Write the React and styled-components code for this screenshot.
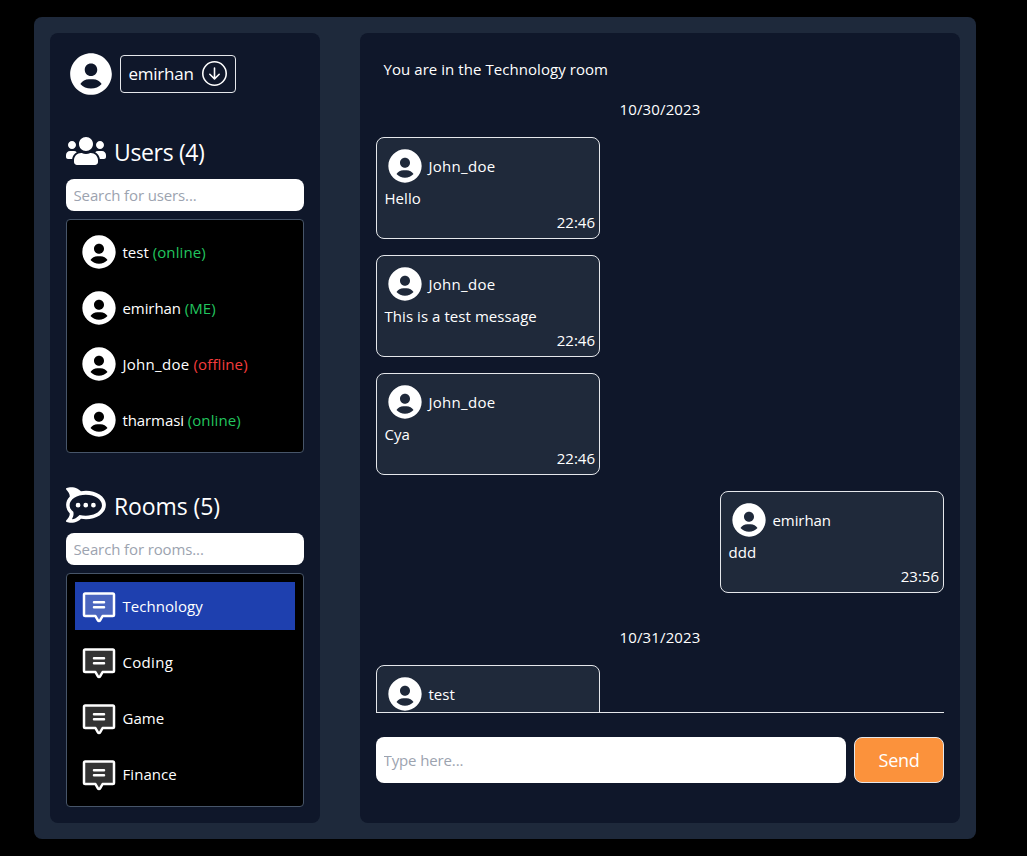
import React from "react";
import styled, { createGlobalStyle } from "styled-components";
import { BiSolidUserCircle } from "react-icons/bi";
import { FaUsers, FaRocketchat } from "react-icons/fa";
import { BsArrowDownCircle } from "react-icons/bs";
import { PiChatCenteredTextDuotone } from "react-icons/pi";

const GlobalStyle = createGlobalStyle`
  *, *::before, *::after { box-sizing: border-box; }
  body {
    margin: 0;
    background: #000;
    color: #fff;
    font: 16px/24px "Segoe UI", "Open Sans", sans-serif;
    overflow: hidden;
  }
  svg { display: block; flex: none; }
  input, button { font: inherit; color: inherit; margin: 0; }
`;

const Text = styled.span`
  font-size: ${(p) => p.$size || 15}px;
  letter-spacing: ${(p) => p.$track || 0}px;
  white-space: nowrap;
  color: ${(p) => p.$color || "inherit"};
`;

const Page = styled.div`
  height: 856px;
  padding: 17px 51px 17px 34px;
`;

const Shell = styled.main`
  display: flex;
  gap: 40px;
  height: 822px;
  padding: 16px;
  border-radius: 8px;
  background: #1e293b;
`;

const Sidebar = styled.aside`
  display: flex;
  flex-direction: column;
  width: 270px;
  padding: 16px;
  border-radius: 8px;
  background: #0f172a;
`;

const Profile = styled.div`
  display: flex;
  align-items: center;
  gap: 4px;
  height: 50px;
  margin-bottom: 32px;
`;

const ProfileButton = styled.button`
  display: flex;
  align-items: center;
  justify-content: space-between;
  width: 116px;
  height: 38px;
  padding: 0 8px 0 7.5px;
  border: 1px solid #e5e7eb;
  border-radius: 4px;
  background: transparent;

  svg { margin-bottom: 1px; }
`;

const SectionTitle = styled.h2`
  display: flex;
  align-items: center;
  gap: 8px;
  height: 40px;
  margin: ${(p) => p.$top || 0}px 0 8px;
  font-weight: 400;
  line-height: 32px;
`;

const TitleLabel = styled.span`
  padding-top: 2px;
`;

const Search = styled.input`
  width: 100%;
  height: 32px;
  padding: 0 7.5px;
  border: 0;
  border-radius: 8px;
  background: #fff;
  color: #111827;
  font-size: 15px;
  letter-spacing: -0.12px;
  &::placeholder { color: #9ca3af; opacity: 1; }
`;

const List = styled.ul`
  display: flex;
  flex-direction: column;
  gap: 8px;
  height: 234px;
  margin: 8px 0 0;
  padding: 8px;
  overflow: hidden;
  list-style: none;
  border: 1px solid #475569;
  border-radius: 4px;
  background: #000;
`;

const ListItem = styled.li`
  display: flex;
  align-items: center;
  gap: 3.5px;
  flex: none;
  height: 48px;
  padding: 4px;
  background: ${(p) => (p.$active ? "#1e40af" : "transparent")};
`;

const Chat = styled.section`
  flex: 1;
  min-width: 0;
  padding: 16px;
  border-radius: 8px;
  background: #0f172a;
`;

const RoomNotice = styled.p`
  margin: 0;
  padding: 8px 7.5px;
`;

const Messages = styled.div`
  display: flex;
  flex-direction: column;
  height: 624px;
  overflow: hidden;
  border-bottom: 1px solid #e5e7eb;
`;

const DateLine = styled.div`
  flex: none;
  margin-top: ${(p) => p.$top || 0}px;
  margin-bottom: 16px;
  text-align: center;
`;

const Bubble = styled.article`
  flex: none;
  align-self: ${(p) => (p.$mine ? "flex-end" : "flex-start")};
  width: 224px;
  height: 102px;
  margin-bottom: 16px;
  padding: 8px 8px 8px 7.5px;
  border: 1px solid #e5e7eb;
  border-radius: 8px;
  background: #1f293a;
`;

const BubbleHead = styled.header`
  display: flex;
  align-items: center;
  gap: 3.5px;
  height: 40px;
  padding-left: 0.5px;
`;

const BubbleBody = styled.p`
  margin: 0;
`;

const BubbleTime = styled.div`
  margin-right: -4px;
  text-align: right;
`;

const Composer = styled.form`
  display: flex;
  gap: 8px;
  margin-top: 24px;
`;

const MessageInput = styled(Search)`
  flex: 1;
  min-width: 0;
  height: 46px;
`;

const SendButton = styled.button`
  width: 90px;
  height: 46px;
  padding: 0;
  border: 1px solid #e5e7eb;
  border-radius: 8px;
  background: #fb923c;
`;

const GREEN = "#22c55e";
const RED = "#f53c3c";

const users = [
  { name: "test", status: "online" },
  { name: "emirhan", status: "ME" },
  { name: "John_doe", status: "offline" },
  { name: "tharmasi", status: "online" },
];

const nameTracking = { John_doe: 0.28, emirhan: -0.08, tharmasi: -0.1 };

const rooms = ["Technology", "Coding", "Game", "Finance"];

const days = [
  {
    date: "10/30/2023",
    messages: [
      { from: "John_doe", body: "Hello", time: "22:46" },
      { from: "John_doe", body: "This is a test message", time: "22:46" },
      { from: "John_doe", body: "Cya", time: "22:46" },
      { from: "emirhan", body: "ddd", time: "23:56", mine: true },
    ],
  },
  { date: "10/31/2023", messages: [{ from: "test", body: "", time: "" }] },
];

export default function App() {
  return (
    <Page>
      <GlobalStyle />
      <Shell>
        <Sidebar>
          <Profile>
            <BiSolidUserCircle size={50} />
            <ProfileButton>
              <Text $size={17} $track={-0.25}>emirhan</Text>
              <BsArrowDownCircle size={25} />
            </ProfileButton>
          </Profile>

          <SectionTitle>
            <FaUsers size={40} />
            <TitleLabel><Text $size={23} $track={-0.35}>Users (4)</Text></TitleLabel>
          </SectionTitle>
          <Search placeholder="Search for users..." />
          <List>
            {users.map((u) => (
              <ListItem key={u.name}>
                <BiSolidUserCircle size={40} />
                <Text $track={nameTracking[u.name]}>
                  {u.name}{" "}
                  <Text $color={u.status === "offline" ? RED : GREEN} $track={0.1}>
                    ({u.status})
                  </Text>
                </Text>
              </ListItem>
            ))}
          </List>

          <SectionTitle $top={32}>
            <FaRocketchat size={40} />
            <TitleLabel><Text $size={23} $track={-0.1}>Rooms (5)</Text></TitleLabel>
          </SectionTitle>
          <Search placeholder="Search for rooms..." />
          <List>
            {rooms.map((r, i) => (
              <ListItem key={r} $active={i === 0}>
                <PiChatCenteredTextDuotone size={40} />
                <Text $track={r === "Coding" ? 0.3 : 0.05}>{r}</Text>
              </ListItem>
            ))}
          </List>
        </Sidebar>

        <Chat>
          <RoomNotice><Text $track={0.06}>You are in the Technology room</Text></RoomNotice>
          <Messages>
            {days.map((d, i) => (
              <React.Fragment key={d.date}>
                <DateLine $top={i === 0 ? 8 : 16}><Text $track={0.15}>{d.date}</Text></DateLine>
                {d.messages.map((m, j) => (
                  <Bubble key={j} $mine={m.mine}>
                    <BubbleHead>
                      <BiSolidUserCircle size={40} />
                      <Text $track={nameTracking[m.from]}>{m.from}</Text>
                    </BubbleHead>
                    <BubbleBody><Text $track={0.06}>{m.body}</Text></BubbleBody>
                    <BubbleTime><Text>{m.time}</Text></BubbleTime>
                  </Bubble>
                ))}
              </React.Fragment>
            ))}
          </Messages>
          <Composer onSubmit={(e) => e.preventDefault()}>
            <MessageInput placeholder="Type here..." />
            <SendButton><Text $size={18} $track={-0.3}>Send</Text></SendButton>
          </Composer>
        </Chat>
      </Shell>
    </Page>
  );
}
